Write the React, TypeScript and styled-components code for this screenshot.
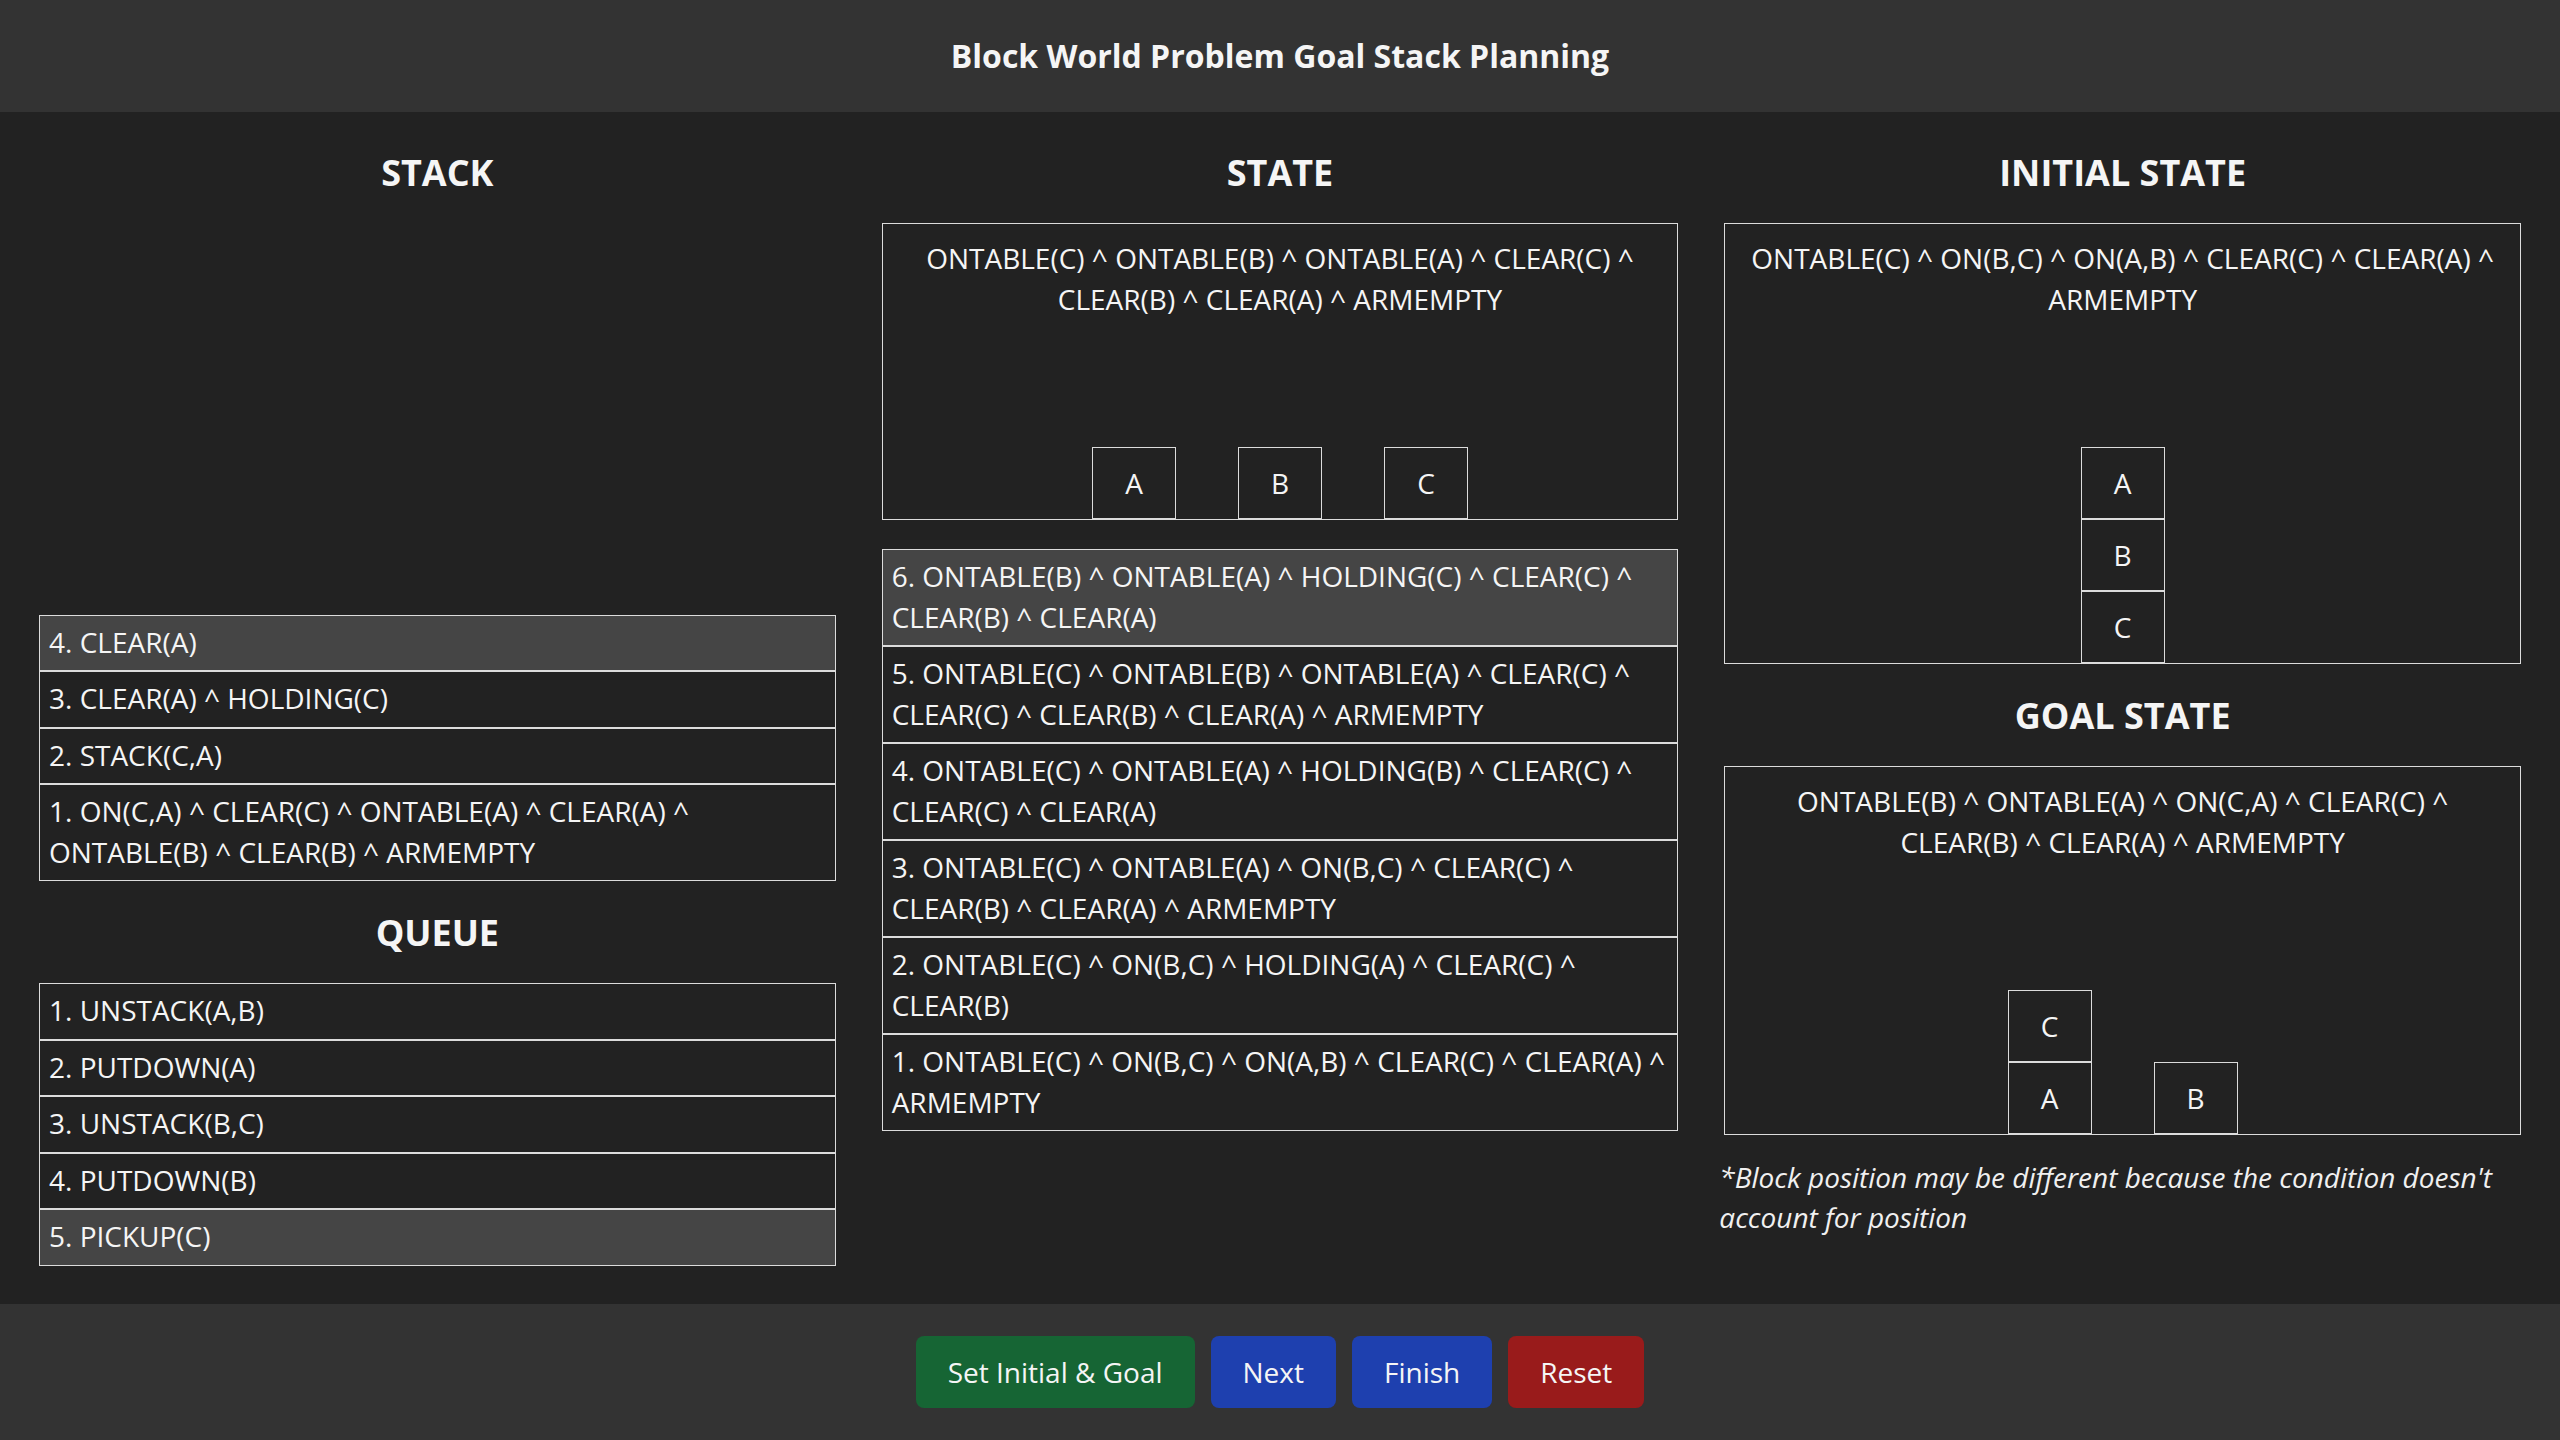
import React from "react";
import styled, { createGlobalStyle } from "styled-components";

const GlobalStyle = createGlobalStyle`
  html, body {
    margin: 0;
    padding: 0;
    background: #222222;
  }
  body {
    font-family: "Open Sans", "Noto Sans", sans-serif;
    color: #f5f5f5;
  }
  * { box-sizing: border-box; }
`;

const Page = styled.div`
  min-height: 100vh;
  display: flex;
  flex-direction: column;
  background: #222222;
`;

const Header = styled.header`
  height: 112px;
  flex: 0 0 112px;
  background: #333333;
  display: flex;
  align-items: center;
  justify-content: center;
`;

const Title = styled.h1`
  margin: 0;
  font-size: 32px;
  font-weight: 700;
  line-height: 1.4;
  color: #f5f5f5;
`;

const Main = styled.main`
  flex: 1;
  display: grid;
  grid-template-columns: repeat(3, minmax(0, 1fr));
  column-gap: 46px;
  padding: 34px 39px 0;
  align-items: start;
`;

const Column = styled.section`
  display: flex;
  flex-direction: column;
  min-width: 0;
`;

const Heading = styled.h2<{ $spaced?: boolean }>`
  margin: ${(p) => (p.$spaced ? "25px" : "0")} 0 23px;
  font-size: 36px;
  font-weight: 700;
  line-height: 54px;
  text-align: center;
  color: #f5f5f5;
`;

const StackArea = styled.div`
  height: 658px;
  display: flex;
  flex-direction: column;
  justify-content: flex-end;
`;

const List = styled.ul<{ $gapTop?: number }>`
  list-style: none;
  margin: ${(p) => p.$gapTop ?? 0}px 0 0;
  padding: 0;
  display: flex;
  flex-direction: column;
`;

const Item = styled.li<{ $active?: boolean }>`
  border: 1px solid #dcdcdc;
  background: ${(p) => (p.$active ? "#454545" : "#222222")};
  padding: 6px 2px 8px 9px;
  font-size: 28px;
  line-height: 40.5px;
  color: #f5f5f5;
`;

const WorldBox = styled.div`
  border: 1px solid #dcdcdc;
  padding: 14px 16px 0;
  display: flex;
  flex-direction: column;
`;

const Condition = styled.p`
  margin: 0;
  font-size: 28px;
  line-height: 41px;
  text-align: center;
  color: #f5f5f5;
`;

const Table = styled.div`
  margin-top: 127px;
  display: flex;
  justify-content: center;
  align-items: flex-end;
  gap: 62px;
`;

const Tower = styled.div`
  display: flex;
  flex-direction: column;
`;

const Block = styled.div`
  width: 84px;
  height: 72px;
  border: 1px solid #dcdcdc;
  display: flex;
  align-items: center;
  justify-content: center;
  font-size: 28px;
  line-height: 1;
  color: #f5f5f5;
`;

const Note = styled.p`
  margin: 22px 0 0 -5px;
  font-size: 28px;
  line-height: 40px;
  font-style: italic;
  color: #f0f0f0;
`;

const Footer = styled.footer`
  height: 136px;
  flex: 0 0 136px;
  background: #333333;
  display: flex;
  align-items: center;
  justify-content: center;
  gap: 16px;
`;

const tones = {
  green: "#166534",
  blue: "#1e40af",
  red: "#991b1b",
};

const Button = styled.button<{ $tone: keyof typeof tones }>`
  height: 72px;
  padding: 0 32px;
  border: none;
  border-radius: 8px;
  background: ${(p) => tones[p.$tone]};
  color: #f5f5f5;
  font-family: "Open Sans", "Noto Sans", sans-serif;
  font-size: 28px;
  line-height: 40px;
  cursor: pointer;
`;

type World = { text: string; towers: string[][] };

const stackItems = [
  "4. CLEAR(A)",
  "3. CLEAR(A) ^ HOLDING(C)",
  "2. STACK(C,A)",
  "1. ON(C,A) ^ CLEAR(C) ^ ONTABLE(A) ^ CLEAR(A) ^ ONTABLE(B) ^ CLEAR(B) ^ ARMEMPTY",
];

const queueItems = [
  "1. UNSTACK(A,B)",
  "2. PUTDOWN(A)",
  "3. UNSTACK(B,C)",
  "4. PUTDOWN(B)",
  "5. PICKUP(C)",
];

const stateItems = [
  "6. ONTABLE(B) ^ ONTABLE(A) ^ HOLDING(C) ^ CLEAR(C) ^ CLEAR(B) ^ CLEAR(A)",
  "5. ONTABLE(C) ^ ONTABLE(B) ^ ONTABLE(A) ^ CLEAR(C) ^ CLEAR(C) ^ CLEAR(B) ^ CLEAR(A) ^ ARMEMPTY",
  "4. ONTABLE(C) ^ ONTABLE(A) ^ HOLDING(B) ^ CLEAR(C) ^ CLEAR(C) ^ CLEAR(A)",
  "3. ONTABLE(C) ^ ONTABLE(A) ^ ON(B,C) ^ CLEAR(C) ^ CLEAR(B) ^ CLEAR(A) ^ ARMEMPTY",
  "2. ONTABLE(C) ^ ON(B,C) ^ HOLDING(A) ^ CLEAR(C) ^ CLEAR(B)",
  "1. ONTABLE(C) ^ ON(B,C) ^ ON(A,B) ^ CLEAR(C) ^ CLEAR(A) ^ ARMEMPTY",
];

const current: World = {
  text: "ONTABLE(C) ^ ONTABLE(B) ^ ONTABLE(A) ^ CLEAR(C) ^ CLEAR(B) ^ CLEAR(A) ^ ARMEMPTY",
  towers: [["A"], ["B"], ["C"]],
};

const initial: World = {
  text: "ONTABLE(C) ^ ON(B,C) ^ ON(A,B) ^ CLEAR(C) ^ CLEAR(A) ^ ARMEMPTY",
  towers: [["A", "B", "C"]],
};

const goal: World = {
  text: "ONTABLE(B) ^ ONTABLE(A) ^ ON(C,A) ^ CLEAR(C) ^ CLEAR(B) ^ CLEAR(A) ^ ARMEMPTY",
  towers: [["C", "A"], ["B"]],
};

function WorldView({ world }: { world: World }) {
  return (
    <WorldBox>
      <Condition>{world.text}</Condition>
      <Table>
        {world.towers.map((tower, i) => (
          <Tower key={i}>
            {tower.map((b) => (
              <Block key={b}>{b}</Block>
            ))}
          </Tower>
        ))}
      </Table>
    </WorldBox>
  );
}

export default function App() {
  return (
    <>
      <GlobalStyle />
      <Page>
        <Header>
          <Title>Block World Problem Goal Stack Planning</Title>
        </Header>
        <Main>
          <Column>
            <Heading>STACK</Heading>
            <StackArea>
              <List>
                {stackItems.map((t, i) => (
                  <Item key={t} $active={i === 0}>
                    {t}
                  </Item>
                ))}
              </List>
            </StackArea>
            <Heading $spaced>QUEUE</Heading>
            <List>
              {queueItems.map((t, i) => (
                <Item key={t} $active={i === queueItems.length - 1}>
                  {t}
                </Item>
              ))}
            </List>
          </Column>
          <Column>
            <Heading>STATE</Heading>
            <WorldView world={current} />
            <List $gapTop={29}>
              {stateItems.map((t, i) => (
                <Item key={t} $active={i === 0}>
                  {t}
                </Item>
              ))}
            </List>
          </Column>
          <Column>
            <Heading>INITIAL STATE</Heading>
            <WorldView world={initial} />
            <Heading $spaced>GOAL STATE</Heading>
            <WorldView world={goal} />
            <Note>
              *Block position may be different because the condition doesn't account for position
            </Note>
          </Column>
        </Main>
        <Footer>
          <Button $tone="green">Set Initial &amp; Goal</Button>
          <Button $tone="blue">Next</Button>
          <Button $tone="blue">Finish</Button>
          <Button $tone="red">Reset</Button>
        </Footer>
      </Page>
    </>
  );
}
